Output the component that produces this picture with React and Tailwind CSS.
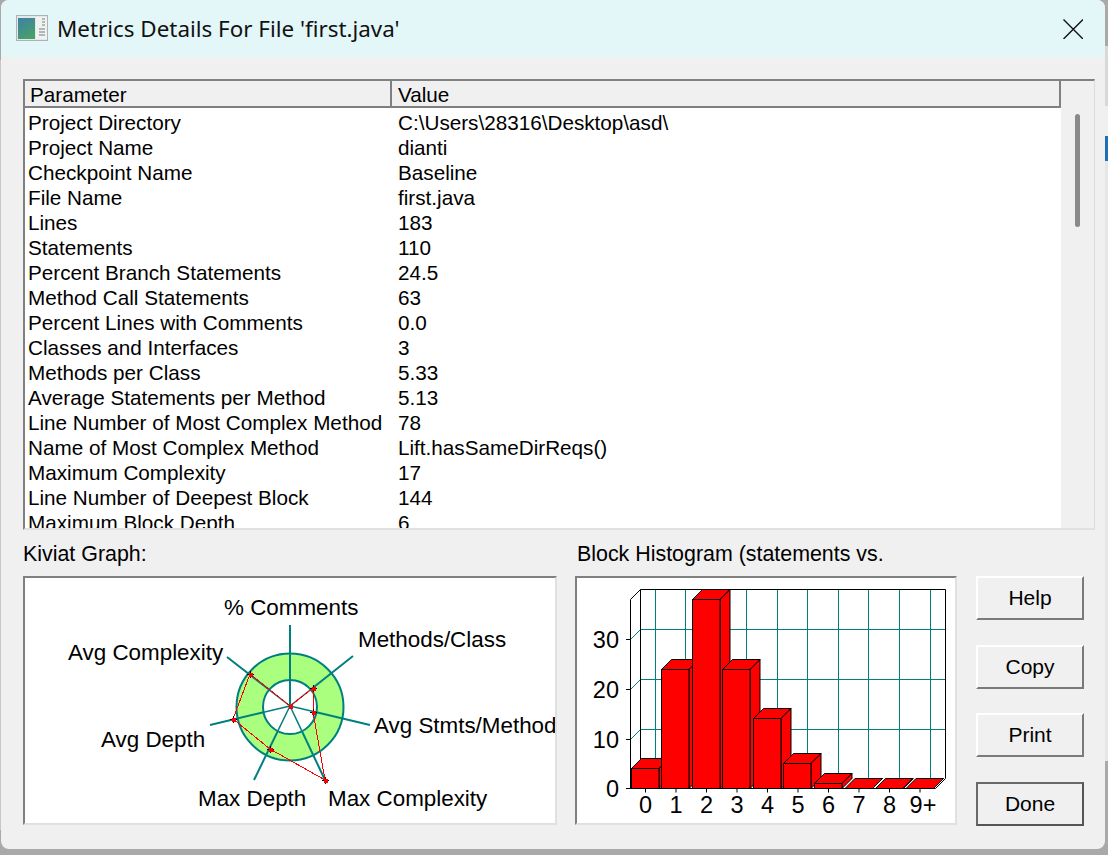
const rows = [
  ["Project Directory", "C:\\Users\\28316\\Desktop\\asd\\"],
  ["Project Name", "dianti"],
  ["Checkpoint Name", "Baseline"],
  ["File Name", "first.java"],
  ["Lines", "183"],
  ["Statements", "110"],
  ["Percent Branch Statements", "24.5"],
  ["Method Call Statements", "63"],
  ["Percent Lines with Comments", "0.0"],
  ["Classes and Interfaces", "3"],
  ["Methods per Class", "5.33"],
  ["Average Statements per Method", "5.13"],
  ["Line Number of Most Complex Method", "78"],
  ["Name of Most Complex Method", "Lift.hasSameDirReqs()"],
  ["Maximum Complexity", "17"],
  ["Line Number of Deepest Block", "144"],
  ["Maximum Block Depth", "6"],
];

const TitleIcon = () => (
  <svg width="32" height="28" viewBox="0 0 32 28" className="ml-[15px] mr-[9px]">
    <defs>
      <linearGradient id="ti" x1="0" y1="0" x2="0.5" y2="1">
        <stop offset="0" stopColor="#3f7fa8" />
        <stop offset="1" stopColor="#46a06a" />
      </linearGradient>
    </defs>
    <rect x="0.5" y="0.5" width="31" height="25" fill="#e4e8e8" stroke="#a9b4b8" />
    <rect x="2" y="3" width="17" height="21" fill="url(#ti)" />
    <rect x="20" y="2" width="11" height="22" fill="#f0f2f2" />
    <path d="M26 4h3M26 7h3M26 10h3M23 14h6M23 17h6M23 20h6" stroke="#9aa5a5" strokeWidth="1.5" />
  </svg>
);

const teal = "#007f7f";

// spoke ends, relative to the page
const spokes = [
  [290, 625],
  [353, 656],
  [370, 725],
  [325, 780],
  [254, 780],
  [210, 725],
  [227, 657],
];
const kiviatPoints = [
  [290, 706],
  [313, 688],
  [313, 712],
  [325, 780],
  [270, 749],
  [233, 719],
  [250, 674],
];
const kiviatLabels = [
  ["% Comments", 224, 615],
  ["Methods/Class", 358, 647],
  ["Avg Complexity", 68, 660],
  ["Avg Stmts/Method", 374, 733],
  ["Avg Depth", 101, 747],
  ["Max Depth", 198, 806],
  ["Max Complexity", 328, 806],
];

const KiviatGraph = () => (
  <svg width="534" height="249" viewBox="23 576 534 249" className="block">
    <circle cx="290" cy="707" r="53.5" fill="#aaff7f" stroke={teal} strokeWidth="2" />
    <circle cx="290" cy="707" r="27" fill="#fff" stroke={teal} strokeWidth="2" />
    {spokes.map(([x, y]) => {
      // thin inside the hole, thick from the inner ring outwards
      const mx = 290 + (x - 290) * 0.33;
      const my = 706 + (y - 706) * 0.33;
      return (
        <g key={x + "-" + y} stroke={teal}>
          <line x1="290" y1="706" x2={mx} y2={my} strokeWidth={x === 290 ? 2 : 1.5} />
          <line x1={mx} y1={my} x2={x} y2={y} strokeWidth="2" />
        </g>
      );
    })}
    <polygon
      points={kiviatPoints.map((p) => p.join(",")).join(" ")}
      fill="none"
      stroke="#ff0000"
      strokeWidth="1"
      shapeRendering="crispEdges"
    />
    {kiviatPoints.map(([x, y], i) => (
      <g key={x + "-" + y} shapeRendering="crispEdges">
        {i > 0 && <path d={`M${x - 3} ${y + 0.5}h7M${x + 0.5} ${y - 3}v7`} stroke="#000" strokeWidth="1" />}
        <rect x={x - 1.5} y={y - 1.5} width="4" height="4" fill="#ff0000" />
      </g>
    ))}
    {kiviatLabels.map(([t, x, y]) => (
      <text key={t} x={x} y={y} fontSize="22.4" fontFamily="'Liberation Sans', sans-serif" fill="#000">
        {t}
      </text>
    ))}
  </svg>
);

const bars = [
  { x: 631.5, top: 768.5 },
  { x: 661.5, top: 669.5 },
  { x: 692.5, top: 599.5 },
  { x: 722.5, top: 669.5 },
  { x: 753.5, top: 718.5 },
  { x: 783.5, top: 763.5 },
  { x: 814.5, top: 783.5 },
  { x: 845, top: 788.5 },
  { x: 875.5, top: 788.5 },
  { x: 906, top: 788.5 },
];
const xLabels = ["0", "1", "2", "3", "4", "5", "6", "7", "8", "9+"];
const gridX = [655.5, 685.5, 716.5, 746.5, 777.5, 807.5, 838.5, 868.5, 899.5, 930.5];
const gridY = [629.5, 679.5, 729.5];

const Histogram = () => (
  <svg width="382" height="249" viewBox="575 576 382 249" className="block">
    {gridX.map((x) => (
      <line key={x} x1={x} y1="589.5" x2={x} y2="778.5" stroke={teal} />
    ))}
    {gridY.map((y) => (
      <g key={y}>
        <line x1="640.5" y1={y} x2="945.5" y2={y} stroke={teal} />
        <line x1="630.5" y1={y + 10} x2="640.5" y2={y} stroke={teal} />
      </g>
    ))}
    <path d="M630.5 788.5V599.5L640.5 589.5H945.5V778.5L935.5 788.5H630.5" fill="none" stroke="#000" />
    <line x1="640.5" y1="589.5" x2="640.5" y2="778.5" stroke="#000" />
    {[639.5, 689.5, 739.5, 788.5].map((y) => (
      <line key={y} x1="626" y1={y} x2="630.5" y2={y} stroke="#000" />
    ))}
    {bars.map(({ x, top }, i) => (
      <g key={i} stroke="#000" fill="#ff0000">
        <path d={`M${x} ${top}l10 -10h27.5l-10 10z`} />
        <path d={`M${x + 27.5} ${top}l10 -10V778.5l-10 10z`} />
        {top < 788 && <rect x={x} y={top} width="27.5" height={788.5 - top} />}
      </g>
    ))}
    {xLabels.map((t, i) => {
      const cx = 645.5 + i * 30.5;
      return (
        <g key={t}>
          <line x1={cx} y1="788.5" x2={cx} y2="792.5" stroke="#000" />
          <text
            x={i === 9 ? cx + 3 : cx}
            y="813"
            textAnchor="middle"
            fontSize="23.5"
            fontFamily="'Liberation Sans', sans-serif"
            fill="#000"
          >
            {t}
          </text>
        </g>
      );
    })}
    {[
      ["30", 648],
      ["20", 698],
      ["10", 748],
      ["0", 797],
    ].map(([t, y]) => (
      <text
        key={t}
        x="619"
        y={y}
        textAnchor="end"
        fontSize="23.5"
        fontFamily="'Liberation Sans', sans-serif"
        fill="#000"
      >
        {t}
      </text>
    ))}
  </svg>
);

const Button = ({ label, isDefault, className }) => (
  <button
    className={`w-[108px] h-[44px] bg-[#f0f0f0] text-[21px] text-black border-t-2 border-l-2 border-b-2 border-r-2 ${
      isDefault
        ? "border-t-[#696969] border-l-[#696969] border-b-[#555555] border-r-[#555555]"
        : "border-t-white border-l-white border-b-[#7a7a7a] border-r-[#7a7a7a]"
    } ${className || ""}`}
  >
    {label}
  </button>
);

const App = () => {
  return (
    <div className="relative w-[1108px] h-[855px] overflow-hidden bg-[#a9a9a9] font-['Liberation_Sans',sans-serif]">
      {/* bits of the window behind */}
      <div className="absolute right-0 top-[46px] w-[4px] h-[60px] bg-[#d8d8d8]" />
      <div className="absolute right-0 top-[106px] w-[4px] h-[30px] bg-[#f0f0f0]" />
      <div className="absolute right-0 top-[136px] w-[4px] h-[25px] bg-[#1f6fb5]" />
      <div className="absolute right-0 top-[161px] w-[4px] h-[600px] bg-[#e6e6e6]" />
      <div className="absolute left-0 top-[60px] w-[2px] h-[770px] bg-[#c8c8c8]" />

      <div className="relative ml-[1px] w-[1104px] h-[849px] rounded-lg overflow-hidden bg-[#f0f0f0] flex flex-col">
        <div className="h-[57px] shrink-0 bg-[#e3f6f8] flex items-center">
          <TitleIcon />
          <span className="font-['Noto_Sans',sans-serif] text-[22.4px] text-[#111]">
            Metrics Details For File 'first.java'
          </span>
          <svg width="20" height="20" viewBox="0 0 20 20" className="ml-auto mr-[22px]">
            <path d="M0.5 0.5L20 20M20 0.5L0.5 20" stroke="#111" strokeWidth="1.4" />
          </svg>
        </div>

        <div className="ml-[22px] mr-[10px] mt-[22px] h-[451px] shrink-0 flex border-t-2 border-l-2 border-t-[#808080] border-l-[#808080] border-b-2 border-b-[#e0e0e0] border-r border-r-[#dcdcdc]">
          <div className="w-[1036px] flex flex-col">
            <div className="h-[27px] shrink-0 flex bg-[#f0f0f0] border-b-2 border-b-[#808080] border-r-2 border-r-[#808080] text-[20.7px] text-black leading-[27px]">
              <div className="w-[367px] pl-[5px] border-r-2 border-r-[#808080]">Parameter</div>
              <div className="pl-[6px]">Value</div>
            </div>
            <div className="flex-1 bg-white overflow-hidden pt-[2px] text-[20.7px] text-black">
              {rows.map(([name, value]) => (
                <div key={name} className="h-[25px] flex leading-[25px] whitespace-nowrap">
                  <div className="w-[373px] pl-[3px]">{name}</div>
                  <div>{value}</div>
                </div>
              ))}
            </div>
          </div>
          <div className="flex-1 flex justify-center pt-[33px]">
            <div className="w-[5px] h-[113px] rounded-full bg-[#8a8a8a]" />
          </div>
        </div>

        <div className="ml-[22px] mt-[12px] flex">
          <div className="w-[534px] mr-[18px]">
            <div className="h-[34px] text-[21.4px] text-black leading-[24px]">Kiviat Graph:</div>
            <div className="w-[534px] h-[249px] bg-white border-t-2 border-l-2 border-t-[#808080] border-l-[#808080] border-b-2 border-b-[#e0e0e0] border-r-2 border-r-[#e0e0e0] overflow-hidden">
              <div className="-mt-[2px] -ml-[2px]">
                <KiviatGraph />
              </div>
            </div>
          </div>
          <div className="w-[382px] mr-[19px]">
            <div className="h-[34px] pl-[2px] text-[21.4px] text-black leading-[24px] whitespace-nowrap">
              Block Histogram (statements vs.
            </div>
            <div className="w-[382px] h-[249px] bg-white border-t-2 border-l-2 border-t-[#808080] border-l-[#808080] border-b-2 border-b-[#e0e0e0] border-r-2 border-r-[#e0e0e0] overflow-hidden">
              <div className="-mt-[2px] -ml-[2px]">
                <Histogram />
              </div>
            </div>
          </div>
          <div className="pt-[34px] flex flex-col">
            <Button label="Help" />
            <Button label="Copy" className="mt-[25px]" />
            <Button label="Print" className="mt-[24px]" />
            <Button label="Done" isDefault className="mt-[25px]" />
          </div>
        </div>
      </div>
    </div>
  );
};

export default App;
